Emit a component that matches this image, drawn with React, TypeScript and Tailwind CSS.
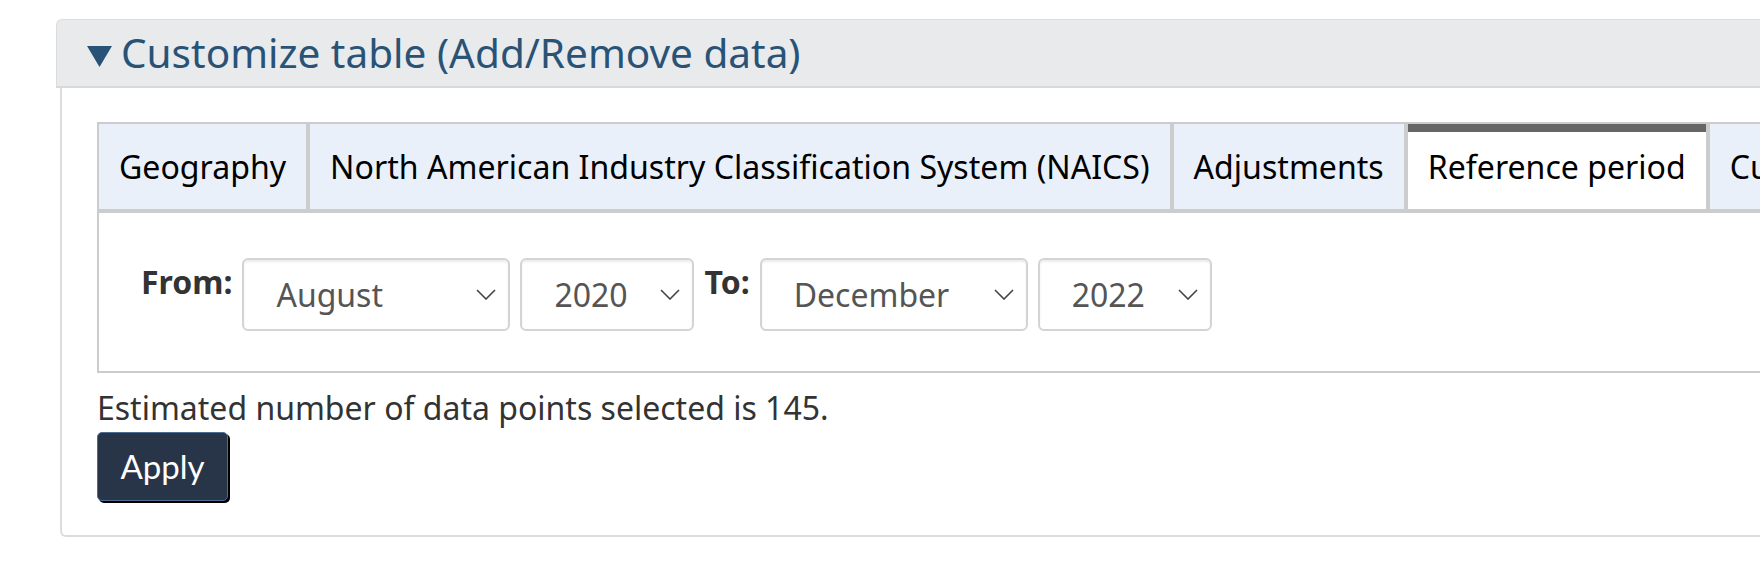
import { ReactNode } from "react";

const tabs = [
  "Geography",
  "North American Industry Classification System (NAICS)",
  "Adjustments",
  "Reference period",
  "Customize layout",
];

function Chevron() {
  return (
    <svg width="20" height="11" viewBox="0 0 20 11" fill="none">
      <path d="M1 1 L10 10 L19 1" stroke="#444" strokeWidth="1.6" />
    </svg>
  );
}

function FakeSelect({ value, width }: { value: string; width: string }) {
  return (
    <div
      className={`${width} h-[73px] shrink-0 flex items-center justify-between pl-[32px] pr-[12px] border-2 border-[#d4d4d4] rounded-[6px] bg-white shadow-[inset_0_2px_2px_rgba(0,0,0,0.075)] text-[32px] leading-[48px] text-[#555]`}
    >
      <span>{value}</span>
      <Chevron />
    </div>
  );
}

function Label({ children }: { children: ReactNode }) {
  return <span className="shrink-0 font-bold text-[32px] leading-[48px] text-[#333]">{children}</span>;
}

export default function App() {
  const active = "Reference period";

  return (
    <div className="w-[1760px] h-[565px] overflow-hidden bg-white font-['Noto_Sans',sans-serif] text-[#333]">
      <div className="ml-[56px] mt-[19px] w-[1800px]">
        {/* Summary / heading */}
        <div className="flex items-start h-[69px] bg-[#e9eaec] border-t border-l border-[#dcdcdc] border-b-2 border-b-[#d9d9d9] rounded-tl-[6px] pl-[30px]">
          <svg width="25" height="21" viewBox="0 0 25 21" className="mt-[26px] shrink-0">
            <polygon points="0,0 25,0 12.5,21" fill="#295376" />
          </svg>
          <span className="ml-[9px] mt-[13px] text-[40.5px] leading-none text-[#295376] whitespace-nowrap">
            Customize table (Add/Remove data)
          </span>
        </div>

        {/* Details body */}
        <div className="ml-[4px] border-l-2 border-b-2 border-[#dcdcdc] rounded-bl-[6px] pl-[35px] pt-[34px] pb-[34px]">
          {/* Tabs */}
          <div className="flex">
            {tabs.map((t) => (
              <div
                key={t}
                className={
                  t === active
                    ? "h-[89px] shrink-0 flex items-center px-[20px] border-2 border-[#ccc] bg-white shadow-[inset_0_8px_0_#666] text-[32.1px] leading-[48px] text-black whitespace-nowrap"
                    : "h-[89px] shrink-0 flex items-center px-[20px] border-2 border-[#ccc] bg-[#e9f0fa] text-[32.1px] leading-[48px] text-black whitespace-nowrap"
                }
              >
                {t}
              </div>
            ))}
          </div>

          {/* Tab panel */}
          <div className="h-[162px] border-2 border-[#ccc] pl-[42px] pt-[45px]">
            <div className="flex items-start gap-[10px]">
              <Label>From:</Label>
              <FakeSelect value="August" width="w-[268px]" />
              <FakeSelect value="2020" width="w-[174px]" />
              <Label>To:</Label>
              <FakeSelect value="December" width="w-[268px]" />
              <FakeSelect value="2022" width="w-[174px]" />
            </div>
          </div>

          <p className="mt-[11px] text-[32px] leading-[48px] text-[#333]">
            Estimated number of data points selected is 145.
          </p>
          <button className="w-[131px] h-[69px] rounded-[5px] bg-[#283548] border border-[#4d6c91] shadow-[2px_2px_0_#000] font-['Lato',sans-serif] text-[33px] text-white">
            Apply
          </button>
        </div>
      </div>
    </div>
  );
}
